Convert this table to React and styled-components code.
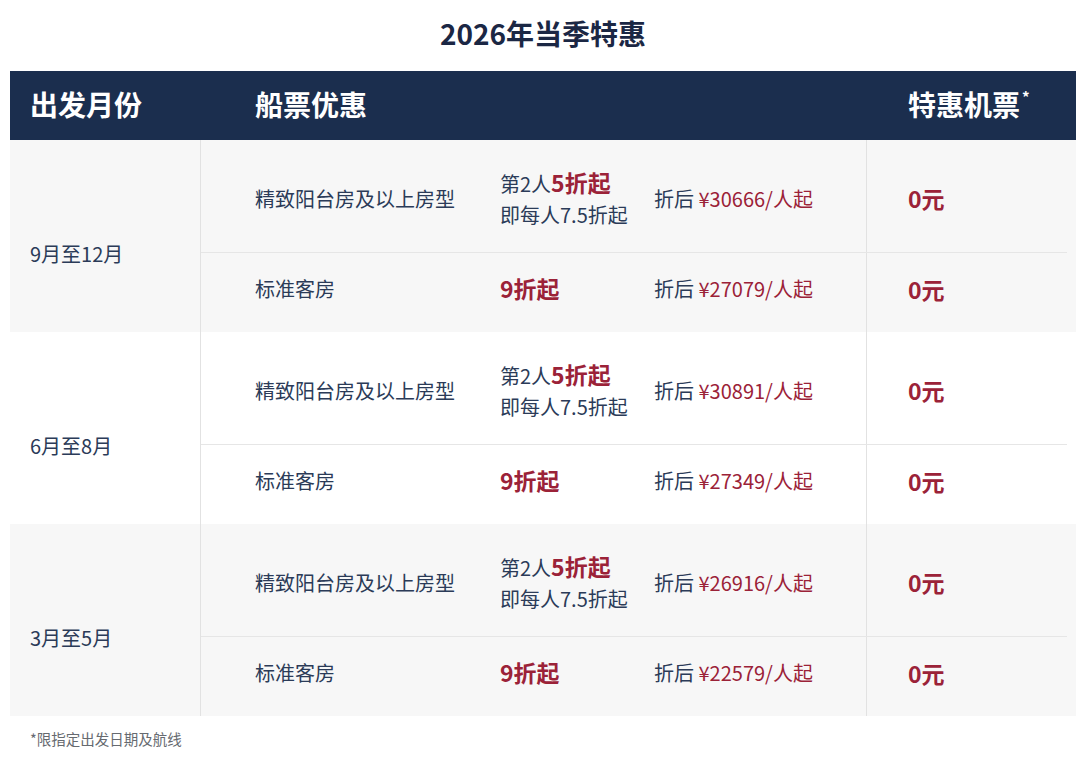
import styled, { createGlobalStyle } from "styled-components";

const GlobalStyle = createGlobalStyle`
  body {
    margin: 0;
    background: #ffffff;
    font-family: "Noto Sans CJK SC", "Noto Sans", sans-serif;
  }
  * {
    box-sizing: border-box;
  }
`;

const Page = styled.div`
  width: 1080px;
  padding: 0 4px 0 10px;
`;

const Title = styled.h1`
  margin: 0;
  height: 71px;
  display: flex;
  align-items: center;
  justify-content: center;
  padding-bottom: 6px;
  font-size: 28px;
  font-weight: 700;
  color: #1b2744;
`;

const Header = styled.div`
  height: 69px;
  padding-bottom: 4px;
  background: #1b2e4e;
  display: grid;
  grid-template-columns: 245px 611px 1fr;
  align-items: center;
  color: #ffffff;
  font-size: 28px;
  font-weight: 700;
`;

const HeadCell = styled.div`
  padding-left: ${(p) => p.$pad}px;
  sup {
    font-size: 15px;
    vertical-align: top;
    position: relative;
    top: 2px;
    margin-left: 2px;
  }
`;

const Group = styled.div`
  display: flex;
  background: ${(p) => (p.$shaded ? "#f7f7f7" : "#ffffff")};
`;

const Month = styled.div`
  width: 191px;
  border-right: 1px solid #e2e2e2;
  display: flex;
  align-items: center;
  padding: 34px 0 0 20px;
  font-size: 20px;
  color: #2b3b58;
`;

const Rows = styled.div`
  flex: 1;
  margin-right: 9px;
`;

// $top / $bottom nudge the text of a row off its vertical centre
const Row = styled.div`
  display: grid;
  grid-template-columns: 299px 154px 212px 1fr;
  align-items: center;
  height: ${(p) => p.$h}px;
  border-bottom: ${(p) => (p.$last ? "none" : "1px solid #e6e6e6")};
  color: #2b3b58;
  font-size: 20px;

  & > * {
    padding-top: ${(p) => p.$top || 0}px;
    padding-bottom: ${(p) => p.$bottom || 0}px;
  }
`;

const Cell = styled.div`
  padding-left: ${(p) => p.$pad || 0}px;
  line-height: 31px;
`;

const Big = styled.span`
  color: #9b2238;
  font-weight: 700;
  font-size: 23px;
`;

const Red = styled.span`
  color: #9b2238;
`;

const Flight = styled.div`
  align-self: stretch;
  display: flex;
  align-items: center;
  border-left: 1px solid #e2e2e2;
  padding-left: 41px;
  color: #9b2238;
  font-weight: 700;
  font-size: 23px;
`;

const Note = styled.p`
  margin: 0;
  padding: 12px 0 0 20px;
  font-size: 14.5px;
  color: #666a70;
`;

const groups = [
  { month: "9月至12月", p1: "30666", p2: "27079", shaded: true },
  { month: "6月至8月", p1: "30891", p2: "27349", shaded: false },
  { month: "3月至5月", p1: "26916", p2: "22579", shaded: true },
];

export default function App() {
  return (
    <Page>
      <GlobalStyle />
      <Title>2026年当季特惠</Title>
      <Header>
        <HeadCell $pad={20}>出发月份</HeadCell>
        <HeadCell $pad={0}>船票优惠</HeadCell>
        <HeadCell $pad={42}>
          特惠机票<sup>*</sup>
        </HeadCell>
      </Header>
      {groups.map((g) => (
        <Group key={g.month} $shaded={g.shaded}>
          <Month>{g.month}</Month>
          <Rows>
            <Row $h={113} $top={4}>
              <Cell $pad={54}>精致阳台房及以上房型</Cell>
              <Cell>
                第2人<Big>5折起</Big>
                <br />
                即每人7.5折起
              </Cell>
              <Cell>
                折后 <Red>¥{g.p1}/人起</Red>
              </Cell>
              <Flight>0元</Flight>
            </Row>
            <Row $h={79} $bottom={8} $last>
              <Cell $pad={54}>标准客房</Cell>
              <Cell>
                <Big>9折起</Big>
              </Cell>
              <Cell>
                折后 <Red>¥{g.p2}/人起</Red>
              </Cell>
              <Flight>0元</Flight>
            </Row>
          </Rows>
        </Group>
      ))}
      <Note>*限指定出发日期及航线</Note>
    </Page>
  );
}
